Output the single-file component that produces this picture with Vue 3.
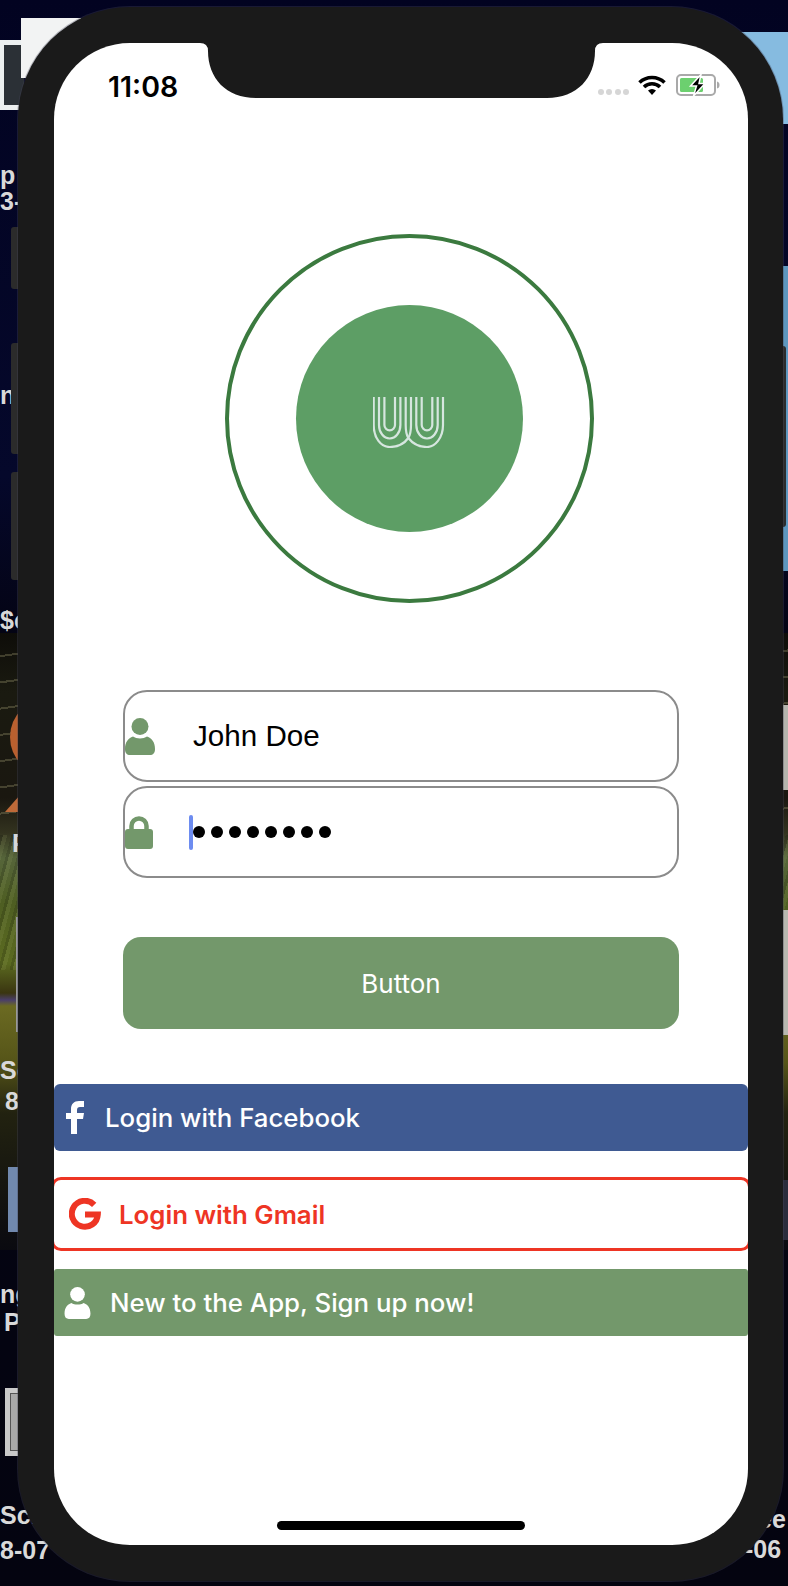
<script setup>
const dots = [1, 2, 3, 4, 5, 6, 7, 8];
const arcs = [
  { rx: 10.7, ry: 13.5 },
  { rx: 5.3, ry: 5.3 }
];
const uPath = (cx, a) => `M${cx - a.rx} 0 V28 A${a.rx} ${a.ry} 0 0 0 ${cx + a.rx} 28 V0`;
</script>

<template>
  <div class="desktop">
    <!-- bits of the mac desktop that stick out behind the simulator -->
    <div class="wall-forest"></div>
    <div class="twigs"></div>
    <div class="foliage"></div>
    <div class="thumb thumb-a"><i></i></div>
    <div class="thumb thumb-b"></div>
    <div class="thumb thumb-c"><i></i></div>
    <div class="orange-circle"></div>
    <div class="orange-tri"></div>
    <div class="blue-box"></div>
    <div class="folder folder-top"></div>
    <div class="folder folder-mid"></div>
    <div class="strip strip-a"></div>
    <div class="strip strip-b"></div>
    <div class="strip strip-c"></div>
    <div class="strip strip-left"></div>
    <span class="label l1">p</span>
    <span class="label l2">3-</span>
    <span class="label l3">n</span>
    <span class="label l4">$c</span>
    <span class="label l5">P</span>
    <span class="label l6">Sc</span>
    <span class="label l7">8</span>
    <span class="label l8">ng</span>
    <span class="label l9">P</span>
    <span class="label l10">Scr</span>
    <span class="label l11">8-07</span>
    <span class="label l12">ee</span>
    <span class="label l13">-06</span>

    <div class="side-btn side-a"></div>
    <div class="side-btn side-b"></div>
    <div class="side-btn side-c"></div>
    <div class="side-btn side-d"></div>

    <div class="phone">
      <div class="screen">
        <svg class="notch" width="403" height="55" viewBox="-8 0 403 55">
          <path d="M-8 0 Q0 0 0 8 C0 35 18 55 48 55 H339 C369 55 387 35 387 8 Q387 0 395 0 Z" fill="#1a1a1a" />
        </svg>

        <div class="status">
          <span class="time">11:08</span>
          <div class="signal">
            <i v-for="n in 4" :key="n"></i>
          </div>
          <svg class="wifi" width="28" height="20" viewBox="0 0 28 20">
            <path d="M1.5 7.5 A18 18 0 0 1 26.5 7.5" fill="none" stroke="#000" stroke-width="3.6" />
            <path d="M6 12 A11.5 11.5 0 0 1 22 12" fill="none" stroke="#000" stroke-width="3.6" />
            <path d="M10 15.5 L14 20 L18 15.5 A6 6 0 0 0 10 15.5 Z" fill="#000" />
          </svg>
          <svg class="battery" width="44" height="22" viewBox="0 0 44 22">
            <rect x="1" y="1" width="38" height="20" rx="4" fill="#fff" stroke="#a9a9a9" stroke-width="2" />
            <path d="M41 7.5 Q43.5 8 43.5 11 Q43.5 14 41 14.5 Z" fill="#a9a9a9" />
            <rect x="4" y="4" width="23" height="14" rx="1.5" fill="#6cd06f" />
            <path d="M25 0.5 L14.5 12 H20.5 L17.5 22 L29 9.5 H23 Z" fill="#000" stroke="#fff" stroke-width="1.5" />
          </svg>
        </div>

        <div class="logo-wrap">
          <div class="ring">
            <div class="disc">
              <svg class="mark" width="73" height="51" viewBox="0 0 73 51">
                <g fill="none" stroke="#d6e6df" stroke-width="2.2">
                  <path d="M0.7 0 V28 C0.7 41 8 50 16.7 50 C24 50 31 47 35.3 41 C33.5 38 32.7 33 32.7 28 V0" />
                  <path d="M38 0 V28 C38 33 37.2 38 35.3 41 C40 47 46 50 54 50 C62 50 70 41 70 28 V0" />
                  <path v-for="a in arcs" :key="'l' + a.rx" :d="uPath(16.7, a)" />
                  <path v-for="a in arcs" :key="'r' + a.rx" :d="uPath(54, a)" />
                </g>
              </svg>
            </div>
          </div>
        </div>

        <div class="form">
          <div class="field">
            <svg class="field-icon" width="30" height="37" viewBox="0 0 30 37">
              <circle cx="15" cy="8.5" r="8.5" fill="#73986b" />
              <path d="M0 31 C0 24 3 20.5 8 18.5 C11.5 21 18.5 21 22 18.5 C27 20.5 30 24 30 31 C30 35 28 37 25 37 H5 C2 37 0 35 0 31 Z" fill="#73986b" />
            </svg>
            <span class="field-text">John Doe</span>
          </div>
          <div class="field">
            <svg class="field-icon" width="30" height="33" viewBox="0 0 30 33">
              <path d="M6.5 15 V10 A7.5 7.5 0 0 1 21.5 10 V15" fill="none" stroke="#73986b" stroke-width="4.5" />
              <rect x="0" y="13" width="28" height="20" rx="3" fill="#73986b" />
            </svg>
            <span class="caret"></span>
            <span class="pw-dots"><i v-for="d in dots" :key="d"></i></span>
          </div>
          <button class="submit">Button</button>
        </div>

        <div class="social fb">
          <svg width="18" height="33" viewBox="0 0 18 33">
            <path d="M5 33 V18 H0 V12 H5 V8 C5 3 8 0 13 0 H18 V6 H14 C12 6 11 7 11 9 V12 H18 L17 18 H11 V33 Z" fill="#fff" />
          </svg>
          <span>Login with Facebook</span>
        </div>
        <div class="social gmail">
          <svg width="32" height="32" viewBox="0 0 32 32">
            <path d="M25.2 6.8 A13 13 0 1 0 28.8 16.5 H16" fill="none" stroke="#ee3524" stroke-width="6" />
          </svg>
          <span>Login with Gmail</span>
        </div>
        <div class="social signup">
          <svg width="27" height="32" viewBox="0 0 30 37">
            <circle cx="15" cy="8.5" r="8.5" fill="#fff" />
            <path d="M0 31 C0 24 3 20.5 8 18.5 C11.5 21 18.5 21 22 18.5 C27 20.5 30 24 30 31 C30 35 28 37 25 37 H5 C2 37 0 35 0 31 Z" fill="#fff" />
          </svg>
          <span>New to the App, Sign up now!</span>
        </div>

        <div class="home-bar"></div>
      </div>
    </div>
  </div>
</template>

<style>
html, body { margin: 0; padding: 0; background: #02031a; }
</style>

<style scoped>
.desktop {
  position: relative;
  width: 788px;
  height: 1586px;
  overflow: hidden;
  background: linear-gradient(180deg, #020321 0%, #05082b 30%, #040414 40%, #040410 100%);
  font-family: "Liberation Sans", Arial, sans-serif;
}

.wall-forest {
  position: absolute;
  left: 0;
  right: 0;
  top: 633px;
  height: 617px;
  background: linear-gradient(180deg,
    #0e0d09 0,
    #1a1a10 60px,
    #1a1710 165px,
    #33331f 200px,
    #56653a 225px,
    #4e5e22 270px,
    #5b6a20 330px,
    #3a3510 360px,
    #4a3e6a 367px,
    #6b6a22 373px,
    #555418 430px,
    #222210 480px,
    #0a0a10 617px);
}
.twigs {
  position: absolute;
  left: 0;
  right: 0;
  top: 640px;
  height: 175px;
  background: repeating-linear-gradient(172deg, transparent 0 15px, rgba(170, 165, 120, 0.3) 15px 17px, transparent 17px 26px);
}
.foliage {
  position: absolute;
  left: 0;
  right: 0;
  top: 835px;
  height: 135px;
  background: repeating-linear-gradient(105deg, rgba(0, 0, 0, 0.14) 0 3px, rgba(190, 200, 130, 0.1) 3px 7px, transparent 7px 11px);
}

.thumb { position: absolute; background: #eceff0; }
.thumb-a { left: 0; top: 40px; width: 24px; height: 70px; padding: 5px 0 5px 4px; box-sizing: border-box; }
.thumb-a i { display: block; height: 100%; background: #2b3036; }
.thumb-b { left: 21px; top: 18px; width: 60px; height: 60px; background: #f2f3f3; }
.thumb-c { left: 5px; top: 1388px; width: 24px; height: 68px; padding: 5px 0 5px 5px; box-sizing: border-box; background: #c9c9c9; }
.thumb-c i { display: block; height: 100%; background: #a8a8a8; border: 1px solid #555; box-sizing: border-box; }

.orange-circle {
  position: absolute;
  left: 10px;
  top: 698px;
  width: 78px;
  height: 78px;
  border-radius: 50%;
  background: #b9602f;
}
.orange-tri {
  position: absolute;
  left: 5px;
  top: 795px;
  width: 15px;
  height: 17px;
  background: #bf6a38;
  clip-path: polygon(100% 0, 100% 100%, 0 100%);
}
.blue-box { position: absolute; left: 8px; top: 1167px; width: 30px; height: 65px; background: #7189ae; }

.folder { position: absolute; left: 740px; width: 48px; background: #86bbe0; }
.folder-top { top: 32px; height: 92px; }
.folder-mid { top: 266px; height: 305px; background: #5d97bf; }

.strip { position: absolute; left: 780px; width: 8px; background: #b5b5ae; }
.strip-a { top: 705px; height: 85px; }
.strip-b { top: 910px; height: 125px; background: #b8b8b0; }
.strip-c { top: 1180px; height: 60px; background: #2a2c3c; }
.strip-left { left: 16px; width: 3px; top: 917px; height: 115px; background: #9a9a9a; }

.label {
  position: absolute;
  color: #d9d9d9;
  font-size: 25px;
  font-weight: 700;
  line-height: 30px;
  white-space: nowrap;
}
.l1 { left: 0; top: 160px; }
.l2 { left: 0; top: 186px; }
.l3 { left: 0; top: 380px; }
.l4 { left: 0; top: 605px; }
.l5 { left: 12px; top: 828px; }
.l6 { left: 0; top: 1055px; }
.l7 { left: 5px; top: 1086px; }
.l8 { left: 0; top: 1279px; }
.l9 { left: 4px; top: 1307px; }
.l10 { left: 0; top: 1500px; }
.l11 { left: 0; top: 1535px; }
.l12 { left: 758px; top: 1504px; }
.l13 { left: 745px; top: 1534px; }

.side-btn { position: absolute; left: 11px; width: 12px; background: #2b2b2b; border-radius: 3px; }
.side-a { top: 227px; height: 62px; }
.side-b { top: 343px; height: 111px; }
.side-c { top: 472px; height: 108px; }
.side-d { left: 778px; width: 8px; top: 346px; height: 181px; }

.phone {
  position: absolute;
  left: 18px;
  top: 7px;
  width: 765px;
  height: 1574px;
  box-sizing: border-box;
  padding: 36px 35px 36px 36px;
  background: #1a1a1a;
  border-radius: 112px;
  box-shadow: 0 0 0 1px rgba(70, 70, 90, 0.35);
}

.screen {
  position: relative;
  width: 694px;
  height: 1502px;
  background: #fff;
  border-radius: 76px;
  overflow: hidden;
  display: flex;
  flex-direction: column;
}

.notch { position: absolute; left: 146px; top: 0; }

.status {
  display: flex;
  align-items: center;
  height: 84px;
  padding: 0 28px 0 54px;
  flex: none;
}
.time {
  font-family: Inter, "Liberation Sans", sans-serif;
  font-size: 28.5px;
  font-weight: 600;
  color: #000;
  margin-top: 2px;
  margin-right: auto;
}
.signal { display: flex; gap: 2.5px; margin-top: 14px; margin-right: 9px; }
.signal i { width: 6px; height: 6px; border-radius: 50%; background: #d6d6d6; }
.wifi { margin-right: 10px; }

.logo-wrap {
  display: flex;
  justify-content: center;
  padding-left: 17px;
  margin-top: 107px;
}
.ring {
  width: 369px;
  height: 369px;
  box-sizing: border-box;
  border: 4px solid #3b7a3f;
  border-radius: 50%;
  display: flex;
  align-items: center;
  justify-content: center;
}
.disc {
  width: 227px;
  height: 227px;
  border-radius: 50%;
  background: #5d9e65;
  display: flex;
  align-items: center;
  justify-content: center;
}
.mark { margin-top: 8px; }

.form {
  display: flex;
  flex-direction: column;
  gap: 4px;
  margin: 87px 69px 0 69px;
}
.field {
  display: flex;
  align-items: center;
  height: 92px;
  box-sizing: border-box;
  border: 2.5px solid #8b8b8b;
  border-radius: 24px;
}
.field-icon { flex: none; }
.field-text {
  margin-left: 38px;
  font-size: 29.6px;
  color: #000;
}
.caret {
  width: 3.5px;
  height: 35px;
  margin-left: 34px;
  background: #6d8cf0;
  border-radius: 2px;
}
.pw-dots { display: flex; gap: 6px; }
.pw-dots i { width: 12px; height: 12px; border-radius: 50%; background: #000; }

.submit {
  margin-top: 55px;
  height: 92px;
  border: none;
  border-radius: 18px;
  background: #73986b;
  color: #fff;
  font-family: Inter, "Liberation Sans", sans-serif;
  font-size: 26px;
}

.social {
  display: flex;
  align-items: center;
  box-sizing: border-box;
  font-family: Inter, "Liberation Sans", sans-serif;
  font-size: 25.8px;
  font-weight: 500;
  color: #fff;
  flex: none;
}
.fb {
  margin-top: 55px;
  height: 67px;
  padding-left: 12px;
  gap: 21px;
  background: #3f5a92;
  border-radius: 6px;
}
.gmail {
  margin: 26px -3px 0;
  height: 74px;
  padding-left: 15px;
  gap: 18px;
  background: #fff;
  border: 3px solid #ee3524;
  border-radius: 10px;
  color: #ee3524;
  font-weight: 600;
}
.signup {
  margin-top: 18px;
  height: 67px;
  padding-left: 10px;
  gap: 19px;
  background: #73986b;
  border-radius: 3px;
}

.home-bar {
  position: absolute;
  left: 223px;
  bottom: 15px;
  width: 248px;
  height: 9px;
  border-radius: 5px;
  background: #000;
}
</style>
